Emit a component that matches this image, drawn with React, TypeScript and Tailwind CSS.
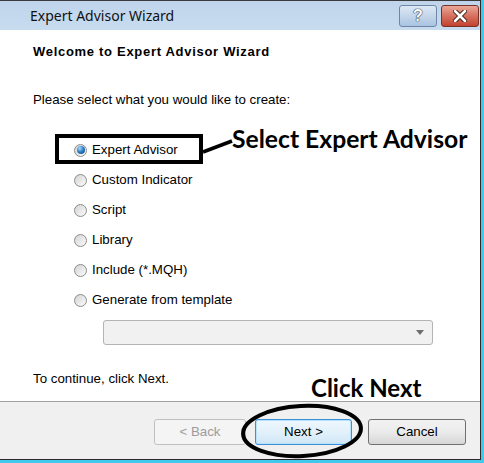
import React from "react"

const options = [
  "Expert Advisor",
  "Custom Indicator",
  "Script",
  "Library",
  "Include (*.MQH)",
  "Generate from template",
]

function Radio({ checked }: { checked?: boolean }) {
  return (
    <span className="w-[13px] h-[13px] rounded-full border border-[#8c8c8c] bg-gradient-to-br from-[#d4d4d4] to-[#fbfbfb] flex items-center justify-center shrink-0">
      {checked && (
        <span className="w-[8px] h-[8px] rounded-full bg-[radial-gradient(circle_at_35%_30%,#a8dcff_0%,#2f82c8_45%,#0c3f78_100%)]" />
      )}
    </span>
  )
}

export default function App() {
  return (
    <div
      className="relative w-[484px] h-[463px] flex flex-col bg-[#40c8ef] text-black"
      style={{ fontFamily: '"Liberation Sans", Arial, sans-serif' }}
    >
      {/* window frame */}
      <div className="flex flex-col w-[481px] h-[460px] border-r border-b border-[#2a2a2a] bg-white">
        {/* Title bar */}
        <div className="h-[30px] shrink-0 flex items-center border-t border-[#3a3a3a] bg-gradient-to-b from-[#bfd4eb] to-[#c8dcf0] relative">
          <span
            className="ml-[30px] text-[14px] text-[#111]"
            style={{ fontFamily: '"Noto Sans", "Open Sans", sans-serif' }}
          >
            Expert Advisor Wizard
          </span>
          <div className="ml-auto mr-[1px] flex gap-[4px] self-start mt-[4px]">
            <div className="w-[38px] h-[22px] rounded-[3px] border border-[#6f87a5] bg-gradient-to-b from-[#dce8f5] via-[#c4d6ea] to-[#a9c3e0] flex items-center justify-center">
              <span
                className="text-[16px] font-bold text-white leading-none"
                style={{ textShadow: "0 0 1px #2a3b55, 0 0 1px #2a3b55, 0 0 1px #2a3b55" }}
              >
                ?
              </span>
            </div>
            <div className="w-[38px] h-[22px] rounded-[3px] border border-[#7a3228] bg-gradient-to-b from-[#e9a898] via-[#d7705f] to-[#c2412f] flex items-center justify-center">
              <svg width="14" height="12" viewBox="0 0 14 12">
                <path d="M2 1 L12 11 M12 1 L2 11" stroke="#3a1a14" strokeWidth="4.5" strokeLinecap="round" />
                <path d="M2 1 L12 11 M12 1 L2 11" stroke="#ffffff" strokeWidth="2.6" strokeLinecap="round" />
              </svg>
            </div>
          </div>
        </div>

        {/* Content */}
        <div className="flex-1 flex flex-col pl-[33px] pt-[14px] border-b border-[#a0a0a0]">
          <div className="text-[13px] font-bold leading-[16px] tracking-[0.7px]">Welcome to Expert Advisor Wizard</div>
          <div className="mt-[32px] text-[13.3px] leading-[16px]">Please select what you would like to create:</div>
          <div className="mt-[27px] flex flex-col pl-[41px]">
            {options.map((o, i) => (
              <div key={o} className="h-[30px] flex items-center gap-[5px] text-[13.3px]">
                <Radio checked={i === 0} />
                <span>{o}</span>
              </div>
            ))}
          </div>
          <div className="mt-[5px] ml-[70px] w-[330px] h-[25px] rounded-[3px] border border-[#b4b4b4] bg-[#f1f1f1] flex items-center justify-end pr-[8px]">
            <svg width="8" height="5" viewBox="0 0 8 5">
              <path d="M0 0 H8 L4 5 Z" fill="#6e6e6e" />
            </svg>
          </div>
          <div className="mt-[26px] text-[13.3px] leading-[16px]">To continue, click Next.</div>
        </div>

        {/* Footer */}
        <div className="h-[57px] shrink-0 bg-[#f0f0f0] flex items-start pt-[17px] text-[13.3px]">
          <div className="ml-[154px] w-[92px] h-[26px] rounded-[3px] border border-[#c0c0c0] bg-[#f4f4f4] text-[#9c9c9c] flex items-center justify-center">
            &lt; Back
          </div>
          <div className="ml-[9px] w-[97px] h-[26px] rounded-[3px] border border-[#3c8fd8] bg-gradient-to-b from-[#eef7fd] via-[#e3f1fb] to-[#cfe6f6] flex items-center justify-center shadow-[inset_0_0_0_1px_#b6e2fb]">
            Next &gt;
          </div>
          <div className="ml-[16px] w-[98px] h-[26px] rounded-[3px] border border-[#707070] bg-gradient-to-b from-[#f2f2f2] via-[#ebebeb] to-[#d6d6d6] flex items-center justify-center">
            Cancel
          </div>
        </div>
      </div>

      {/* Annotations */}
      <svg className="absolute inset-0 pointer-events-none" width="484" height="463" viewBox="0 0 484 463">
        <rect x="57" y="136" width="144" height="26" fill="none" stroke="#000" strokeWidth="4" />
        <path d="M203 152 L232 141" stroke="#000" strokeWidth="3.5" />
        <ellipse cx="302" cy="431" rx="59" ry="25" fill="none" stroke="#000" strokeWidth="4" transform="rotate(-3 302 431)" />
      </svg>
      <div
        className="absolute left-[232px] top-[124px] text-[24.7px] font-bold leading-[30px] text-black"
        style={{ fontFamily: "Lato, sans-serif" }}
      >
        Select Expert Advisor
      </div>
      <div
        className="absolute left-[311px] top-[373px] text-[24px] font-bold leading-[30px] text-black"
        style={{ fontFamily: "Lato, sans-serif" }}
      >
        Click Next
      </div>
    </div>
  )
}
